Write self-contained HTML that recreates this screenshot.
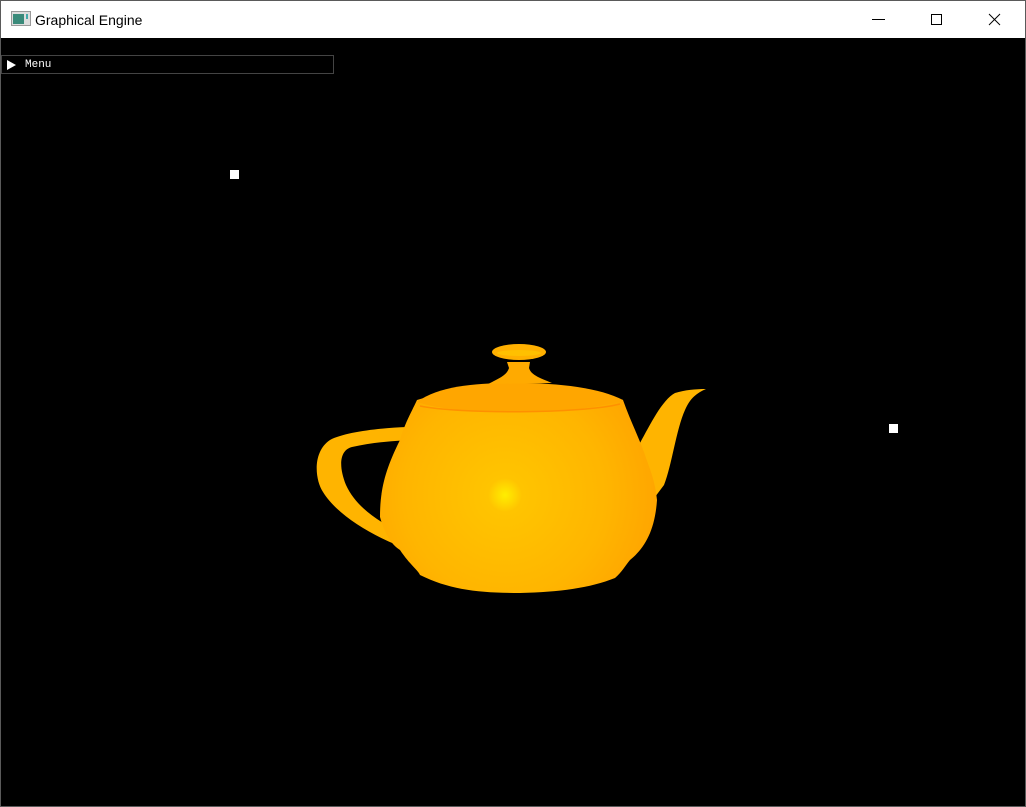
<!DOCTYPE html>
<html><head><style>
html,body{margin:0;padding:0;width:1026px;height:807px;overflow:hidden;background:#000}
.win{position:absolute;left:0;top:0;width:1024px;height:805px;border:1px solid #5a5a5a;background:#000}
.title{position:absolute;left:0;top:0;width:1024px;height:37px;background:#fff;font-family:"Liberation Sans",sans-serif;font-size:14px;color:#000}
.menu{position:absolute;left:0px;top:54px;width:331px;height:17px;border:1px solid #444;background:#000;color:#fff;font-family:"Liberation Mono",monospace;font-size:11px}
</style></head><body>
<div class="win">
<div class="title">
<svg style="position:absolute;left:10px;top:10px" width="20" height="16"><rect x="0.5" y="0.5" width="19" height="14" fill="#ddd" stroke="#999"/><rect x="2" y="3" width="11" height="10" fill="#3a8a7a"/><rect x="15" y="3" width="2" height="5" fill="#4aa"/></svg>
<span style="position:absolute;left:34px;top:11px">Graphical Engine</span>
<svg style="position:absolute;left:859px;top:0" width="164" height="37" stroke="#000" stroke-width="1" fill="none">
<line x1="12" y1="18.5" x2="25" y2="18.5"/>
<rect x="71.5" y="13.5" width="10" height="10"/>
<line x1="129" y1="13" x2="140" y2="24"/><line x1="140" y1="13" x2="129" y2="24"/>
</svg>
</div>
<div class="menu"><svg style="position:absolute;left:5px;top:4px" width="10" height="10"><polygon points="0,0 9,5 0,10" fill="#fff"/></svg><span style="position:absolute;left:23px;top:3px">Menu</span></div>
<div style="position:absolute;left:229px;top:169px;width:9px;height:9px;background:#fff"></div>
<div style="position:absolute;left:888px;top:423px;width:9px;height:9px;background:#fff"></div>
<svg style="position:absolute;left:-1px;top:-1px" width="1026" height="807">
<defs>
<radialGradient id="b" cx="505" cy="495" r="170" gradientUnits="userSpaceOnUse">
<stop offset="0" stop-color="#ffee00"/><stop offset="0.1" stop-color="#ffc400"/><stop offset="0.6" stop-color="#ffb500"/><stop offset="1" stop-color="#ffa000"/></radialGradient>
</defs>
<path d="M407,427 C380,428 345,432 330,440 C312,452 315,480 323,492 C335,512 365,532 397,545 L400,532 C375,520 355,505 346,485 C338,465 340,450 352,447 C375,442 400,440 423,440 Z" fill="#ffb400"/>
<path d="M640,443 C650,425 662,400 675,393 C685,390 695,389 706,389 C697,393 690,398 685,410 C676,430 672,465 664,485 L655,497 Z" fill="#ffb400"/>
<path d="M417,400 C410,415 405,423 400,440 C385,470 380,490 380,517 C385,535 392,545 400,550 C410,565 418,570 420,575 C450,590 480,593 520,593 C560,592 590,588 615,578 C622,572 625,566 630,560 C645,548 655,530 657,500 C655,480 650,470 645,455 C640,440 630,420 623,400 C580,386 460,386 417,400 Z" fill="url(#b)"/>
<path d="M417,402 C440,385 480,383 517,383 C560,383 600,388 623,400 C600,408 560,412 520,412 C480,412 440,410 417,402 Z" fill="#ffa600"/>
<path d="M420,406 C460,414 580,414 620,404" stroke="#ff9000" stroke-width="1.5" fill="none"/>
<path d="M488,384 C500,378 507,375 509,368 L507,362 L530,362 L529,368 C531,375 540,378 552,383 Z" fill="#ffaa00"/>
<ellipse cx="519" cy="352" rx="27" ry="8" fill="#ffb000"/>
<ellipse cx="519" cy="353" rx="22" ry="3" fill="#ffc000"/>
</svg>
</div>
</body></html>
